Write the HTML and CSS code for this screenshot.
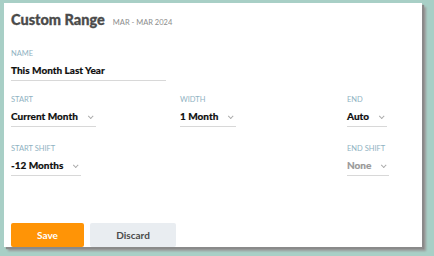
FILE: index.html
```html
<!DOCTYPE html>
<html lang="en">
<head>
    <meta charset="UTF-8">
    <title>Custom Range</title>
    <link rel="stylesheet" href="styles.css">
</head>
<body>
    <div class="panel">
        <div class="header">
            <h1>Custom Range</h1>
            <span class="range">MAR - MAR 2024</span>
        </div>

        <div class="field name-field">
            <label>NAME</label>
            <div class="input">This Month Last Year</div>
        </div>

        <div class="grid">
            <div class="field">
                <label>START</label>
                <div class="select">Current Month <span class="chev"></span></div>
            </div>
            <div class="field">
                <label>WIDTH</label>
                <div class="select">1 Month <span class="chev"></span></div>
            </div>
            <div class="field">
                <label>END</label>
                <div class="select">Auto <span class="chev"></span></div>
            </div>
            <div class="field">
                <label>START SHIFT</label>
                <div class="select">-12 Months <span class="chev"></span></div>
            </div>
            <div class="field"></div>
            <div class="field">
                <label>END SHIFT</label>
                <div class="select disabled">None <span class="chev"></span></div>
            </div>
        </div>

        <div class="actions">
            <button class="save">Save</button>
            <button class="discard">Discard</button>
        </div>
    </div>
</body>
</html>
```

FILE: styles.css
```css
body {
    margin: 0;
    background-color: #a8cfc6;
    font-family: Lato, "Open Sans", sans-serif;
    height: 256px;
    overflow: hidden;
}

.panel {
    margin: 3px 0 0 4px;
    width: 418px;
    height: 244px;
    box-sizing: border-box;
    padding: 8px 0 0 7px;
    background: #fff;
    box-shadow: 2px 2px 1px #8a8a8a, 4px 4px 2px #9a9a9a;
    display: flex;
    flex-direction: column;
    overflow: hidden;
}

.header {
    display: flex;
    align-items: baseline;
    gap: 8px;
}

h1 {
    margin: 0;
    font-size: 14.5px;
    font-weight: 900;
    color: #4b4b4b;
    line-height: 18px;
    -webkit-text-stroke: 0.3px #4b4b4b;
}

.range {
    font-size: 7.5px;
    color: #8c8c8c;
}

.field label {
    display: block;
    font-size: 7.5px;
    color: #8fb2c2;
    line-height: 10px;
    margin-bottom: 5px;
}

.name-field {
    margin-top: 20px;
}

.input {
    width: 155px;
    font-size: 10px;
    font-weight: 900;
    color: #111;
    line-height: 13px;
    padding-bottom: 3px;
    border-bottom: 1px solid #d8d8d8;
    -webkit-text-stroke: 0.15px #111;
}

.grid {
    display: grid;
    grid-template-columns: 169px 167px auto;
    row-gap: 17px;
    margin-top: 14px;
}

.select {
    display: flex;
    width: fit-content;
    align-items: center;
    font-size: 10px;
    font-weight: 900;
    color: #111;
    line-height: 13px;
    padding: 0 4px 3px 0;
    border-bottom: 1px solid #d8d8d8;
    -webkit-text-stroke: 0.15px currentColor;
}

.select.disabled {
    color: #9a9a9a;
}

.chev {
    width: 3px;
    height: 3px;
    margin-left: 10px;
    border-right: 1px solid #aaa;
    border-bottom: 1px solid #aaa;
    transform: rotate(45deg) translateY(-1px);
}

.actions {
    display: flex;
    gap: 6px;
    margin-top: auto;
}

button {
    font-family: Lato, sans-serif;
    font-size: 10px;
    font-weight: 700;
    height: 24px;
    border: none;
    border-radius: 2px;
    cursor: pointer;
}

.save {
    width: 73px;
    background-color: #ff9406;
    color: #fff;
}

.discard {
    width: 86px;
    background-color: #e9edf1;
    color: #4b4b4b;
}
```
